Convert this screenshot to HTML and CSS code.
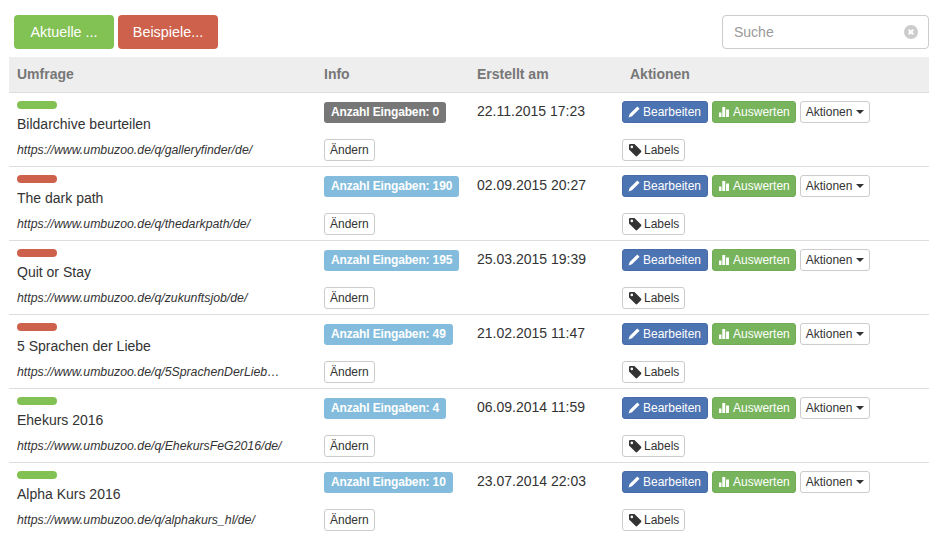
FILE: index.html
```html
<!DOCTYPE html>
<html lang="de">
<head>
    <meta charset="UTF-8">
    <meta name="viewport" content="width=device-width, initial-scale=1.0">
    <title>Umfragen</title>
    <link rel="stylesheet" href="styles.css">
</head>
<body>
    <svg class="sprites" width="0" height="0">
        <symbol id="i-pencil" viewBox="0 0 12 12"><path d="M9.300 .4 11.600 2.700 4 10.300 .5 11.500 1.700 8Z"/></symbol>
        <symbol id="i-chart" viewBox="0 0 12 12"><path d="M1 6.500H3.500V11H1ZM4.300 1H7.200V11H4.300ZM8 3.500H11V11H8Z"/></symbol>
        <symbol id="i-tag" viewBox="0 0 14 14"><path fill-rule="evenodd" d="M1 2.200Q1 1 2.200 1H6.400L13 7.600Q13.800 8.400 13 9.200L9.200 13Q8.400 13.800 7.600 13L1 6.400ZM3.800 2.600A1.300 1.300 0 1 0 3.800 5.200 1.300 1.300 0 1 0 3.800 2.600Z"/></symbol>
    </svg>

    <!-- Toolbar -->
    <div class="toolbar">
        <button class="btn btn-green">Aktuelle ...</button>
        <button class="btn btn-red">Beispiele...</button>
        <div class="search">
            <span class="search-text">Suche</span>
            <svg class="search-clear" viewBox="0 0 14 14" width="14" height="14">
                <circle cx="7" cy="7" r="7" fill="#ccc"/>
                <path d="M4.700 4.700l4.600 4.600M9.300 4.700l-4.600 4.600" stroke="#fff" stroke-width="2"/>
            </svg>
        </div>
    </div>

    <!-- Survey list -->
    <div class="survey-table">
        <div class="table-head">
            <div>Umfrage</div>
            <div>Info</div>
            <div>Erstellt am</div>
            <div class="head-actions">Aktionen</div>
        </div>

        <div class="survey-row">
            <div class="title-cell"><span class="status status-green"></span><span class="title">Bildarchive beurteilen</span></div>
            <div><span class="badge badge-gray">Anzahl Eingaben: 0</span></div>
            <div class="date">22.11.2015 17:23</div>
            <div class="actions">
                <button class="small small-blue"><svg class="icon"><use href="#i-pencil"/></svg>Bearbeiten</button>
                <button class="small small-green"><svg class="icon"><use href="#i-chart"/></svg>Auswerten</button>
                <button class="small">Aktionen<span class="caret"></span></button>
            </div>
            <div class="url">https://www.umbuzoo.de/q/galleryfinder/de/</div>
            <div><button class="small">Ändern</button></div>
            <div></div>
            <div class="actions"><button class="small"><svg class="icon icon-tag"><use href="#i-tag"/></svg>Labels</button></div>
        </div>

        <div class="survey-row">
            <div class="title-cell"><span class="status status-red"></span><span class="title">The dark path</span></div>
            <div><span class="badge badge-blue">Anzahl Eingaben: 190</span></div>
            <div class="date">02.09.2015 20:27</div>
            <div class="actions">
                <button class="small small-blue"><svg class="icon"><use href="#i-pencil"/></svg>Bearbeiten</button>
                <button class="small small-green"><svg class="icon"><use href="#i-chart"/></svg>Auswerten</button>
                <button class="small">Aktionen<span class="caret"></span></button>
            </div>
            <div class="url">https://www.umbuzoo.de/q/thedarkpath/de/</div>
            <div><button class="small">Ändern</button></div>
            <div></div>
            <div class="actions"><button class="small"><svg class="icon icon-tag"><use href="#i-tag"/></svg>Labels</button></div>
        </div>

        <div class="survey-row">
            <div class="title-cell"><span class="status status-red"></span><span class="title">Quit or Stay</span></div>
            <div><span class="badge badge-blue">Anzahl Eingaben: 195</span></div>
            <div class="date">25.03.2015 19:39</div>
            <div class="actions">
                <button class="small small-blue"><svg class="icon"><use href="#i-pencil"/></svg>Bearbeiten</button>
                <button class="small small-green"><svg class="icon"><use href="#i-chart"/></svg>Auswerten</button>
                <button class="small">Aktionen<span class="caret"></span></button>
            </div>
            <div class="url">https://www.umbuzoo.de/q/zukunftsjob/de/</div>
            <div><button class="small">Ändern</button></div>
            <div></div>
            <div class="actions"><button class="small"><svg class="icon icon-tag"><use href="#i-tag"/></svg>Labels</button></div>
        </div>

        <div class="survey-row">
            <div class="title-cell"><span class="status status-red"></span><span class="title">5 Sprachen der Liebe</span></div>
            <div><span class="badge badge-blue">Anzahl Eingaben: 49</span></div>
            <div class="date">21.02.2015 11:47</div>
            <div class="actions">
                <button class="small small-blue"><svg class="icon"><use href="#i-pencil"/></svg>Bearbeiten</button>
                <button class="small small-green"><svg class="icon"><use href="#i-chart"/></svg>Auswerten</button>
                <button class="small">Aktionen<span class="caret"></span></button>
            </div>
            <div class="url">https://www.umbuzoo.de/q/5SprachenDerLieb…</div>
            <div><button class="small">Ändern</button></div>
            <div></div>
            <div class="actions"><button class="small"><svg class="icon icon-tag"><use href="#i-tag"/></svg>Labels</button></div>
        </div>

        <div class="survey-row">
            <div class="title-cell"><span class="status status-green"></span><span class="title">Ehekurs 2016</span></div>
            <div><span class="badge badge-blue">Anzahl Eingaben: 4</span></div>
            <div class="date">06.09.2014 11:59</div>
            <div class="actions">
                <button class="small small-blue"><svg class="icon"><use href="#i-pencil"/></svg>Bearbeiten</button>
                <button class="small small-green"><svg class="icon"><use href="#i-chart"/></svg>Auswerten</button>
                <button class="small">Aktionen<span class="caret"></span></button>
            </div>
            <div class="url">https://www.umbuzoo.de/q/EhekursFeG2016/de/</div>
            <div><button class="small">Ändern</button></div>
            <div></div>
            <div class="actions"><button class="small"><svg class="icon icon-tag"><use href="#i-tag"/></svg>Labels</button></div>
        </div>

        <div class="survey-row">
            <div class="title-cell"><span class="status status-green"></span><span class="title">Alpha Kurs 2016</span></div>
            <div><span class="badge badge-blue">Anzahl Eingaben: 10</span></div>
            <div class="date">23.07.2014 22:03</div>
            <div class="actions">
                <button class="small small-blue"><svg class="icon"><use href="#i-pencil"/></svg>Bearbeiten</button>
                <button class="small small-green"><svg class="icon"><use href="#i-chart"/></svg>Auswerten</button>
                <button class="small">Aktionen<span class="caret"></span></button>
            </div>
            <div class="url">https://www.umbuzoo.de/q/alphakurs_hl/de/</div>
            <div><button class="small">Ändern</button></div>
            <div></div>
            <div class="actions"><button class="small"><svg class="icon icon-tag"><use href="#i-tag"/></svg>Labels</button></div>
        </div>
    </div>
</body>
</html>
```
FILE: styles.css
```css
html, body {
    overflow: hidden;
}
body {
    font-family: "Liberation Sans", Arial, sans-serif;
    font-size: 14px;
    color: #333;
    background-color: #fff;
    margin: 0;
    padding: 15px 16px 0 9px;
}
.sprites {
    display: block;
    height: 0;
}
.toolbar {
    display: flex;
    gap: 4px;
    padding-left: 5px;
    height: 34px;
    margin-bottom: 8px;
}
.btn {
    font: 14.4px "Liberation Sans", Arial, sans-serif;
    color: #fff;
    border: none;
    border-radius: 4px;
    height: 34px;
    width: 100px;
    padding: 0;
}
.btn-green {
    background-color: #82c153;
}
.btn-red {
    background-color: #ce614b;
}
.search {
    margin-left: auto;
    width: 207px;
    height: 34px;
    box-sizing: border-box;
    border: 1px solid #ccc;
    border-radius: 4px;
    display: flex;
    align-items: center;
    justify-content: space-between;
    padding: 0 10px 0 11px;
}
.search-text {
    color: #999;
}
.table-head {
    display: grid;
    grid-template-columns: 307px 153px 153px 1fr;
    align-items: center;
    height: 36px;
    box-sizing: border-box;
    padding-bottom: 2px;
    background-color: #eee;
    border-bottom: 1px solid #ddd;
    font-weight: bold;
    color: #777;
}
.table-head > div {
    padding-left: 8px;
}
.survey-row {
    display: grid;
    grid-template-columns: 307px 153px 153px 1fr;
    grid-template-rows: 46px 28px;
    height: 74px;
    box-sizing: border-box;
    border-bottom: 1px solid #ddd;
}
.survey-row:last-child {
    border-bottom: none;
}
.survey-row > div {
    padding-left: 8px;
    min-width: 0;
}
.survey-row > .actions {
    padding-left: 0;
    padding-top: 8px;
    display: flex;
    align-items: flex-start;
    gap: 4px;
}
.survey-row > .actions:last-child {
    padding-top: 0;
}
.title-cell {
    padding-top: 8px;
}
.status {
    display: block;
    width: 40px;
    height: 8px;
    border-radius: 4px;
}
.status-green {
    background-color: #82c153;
}
.status-red {
    background-color: #ce614b;
}
.title {
    display: block;
    margin-top: 7px;
    line-height: 16px;
}
.url {
    font-size: 12.3px;
    font-style: italic;
    line-height: 22px;
    white-space: nowrap;
    overflow: hidden;
    text-overflow: ellipsis;
}
.badge {
    display: inline-block;
    margin-top: 9px;
    height: 21px;
    line-height: 21px;
    padding: 0 7px;
    border-radius: 3px;
    font-size: 12px;
    letter-spacing: -0.14px;
    font-weight: bold;
    color: #fff;
}
.badge-gray {
    background-color: #777;
}
.badge-blue {
    background-color: #83bcdc;
}
.date {
    padding-top: 10px;
    line-height: 16px;
}
.small {
    font: 12px "Liberation Sans", Arial, sans-serif;
    color: #333;
    background-color: #fff;
    border: 1px solid #ccc;
    border-radius: 3px;
    height: 22px;
    padding: 0 5px;
    display: inline-flex;
    align-items: center;
}
.small-blue {
    background-color: #4c73b2;
    border-color: #466ba6;
    color: #fff;
    padding-right: 6px;
}
.small-green {
    background-color: #77b45c;
    border-color: #70ad54;
    color: #fff;
}
.icon {
    width: 12px;
    height: 12px;
    margin-right: 3px;
    fill: currentColor;
}
.icon-tag {
    width: 14px;
    height: 14px;
    margin-right: 2px;
}
.caret {
    display: inline-block;
    margin-left: 4px;
    border-top: 4px solid #333;
    border-left: 4px solid transparent;
    border-right: 4px solid transparent;
}
```
